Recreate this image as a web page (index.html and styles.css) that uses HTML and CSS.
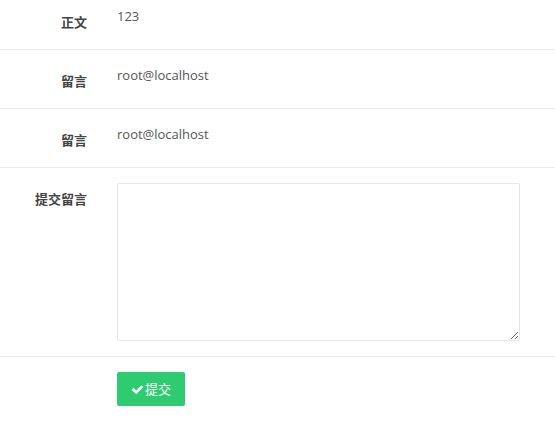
FILE: index.html
```html
<!DOCTYPE html>
<html lang="zh">
<head>
<meta charset="utf-8">
<link rel="stylesheet" href="styles.css">
</head>
<body>
<form class="form">
  <div class="row">
    <div class="label">正文</div>
    <div class="value">123</div>
  </div>
  <div class="row">
    <div class="label">留言</div>
    <div class="value">root@localhost</div>
  </div>
  <div class="row">
    <div class="label">留言</div>
    <div class="value">root@localhost</div>
  </div>
  <div class="row">
    <div class="label">提交留言</div>
    <div class="value"><textarea class="input"></textarea></div>
  </div>
  <div class="row last">
    <div class="label"></div>
    <div class="value">
      <button type="button" class="btn"><svg class="ico" viewBox="0 0 1792 1792"><path d="M1671 566q0 40-28 68l-724 724-136 136q-28 28-68 28t-68-28l-136-136-362-362q-28-28-28-68t28-68l136-136q28-28 68-28t68 28l294 295 656-657q28-28 68-28t68 28l136 136q28 28 28 68z" fill="#fff"/></svg>提交</button>
    </div>
  </div>
</form>
</body>
</html>
```
FILE: styles.css
```css
html, body {
  margin: 0;
  padding: 0;
  background: #fff;
}
body {
  font-family: "Open Sans", "Noto Sans CJK SC", sans-serif;
  font-size: 13px;
  color: #555;
  overflow: hidden;
}
.form {
  margin-top: -10px;
}
.row {
  display: flex;
  padding: 15px 0;
  border-top: 1px solid #e8eaee;
}
.row.last {
  padding-bottom: 30px;
}
.label {
  width: 87px;
  padding-right: 15px;
  padding-top: 6px;
  padding-bottom: 2px;
  text-align: right;
  font-family: "Noto Sans CJK SC", sans-serif;
  font-weight: bold;
  color: #444;
  line-height: 20px;
  min-height: 20px;
}
.value {
  padding-left: 15px;
  line-height: 20px;
}
.input {
  display: block;
  width: 403px;
  height: 158px;
  box-sizing: border-box;
  border: 1px solid #e6e7eb;
  border-radius: 2px;
  margin: 0;
  padding: 6px 10px;
  font-family: inherit;
  font-size: 13px;
  background: #fff;
}
.btn {
  display: flex;
  align-items: center;
  height: 34px;
  box-sizing: border-box;
  padding: 0 14px;
  background: #2ecc71;
  color: #fff;
  border: 0;
  border-radius: 2px;
  font-family: "Noto Sans CJK SC", sans-serif;
  font-size: 13px;
  line-height: 20px;
}
.ico {
  width: 13px;
  height: 13px;
  margin-right: 1px;
}
```
